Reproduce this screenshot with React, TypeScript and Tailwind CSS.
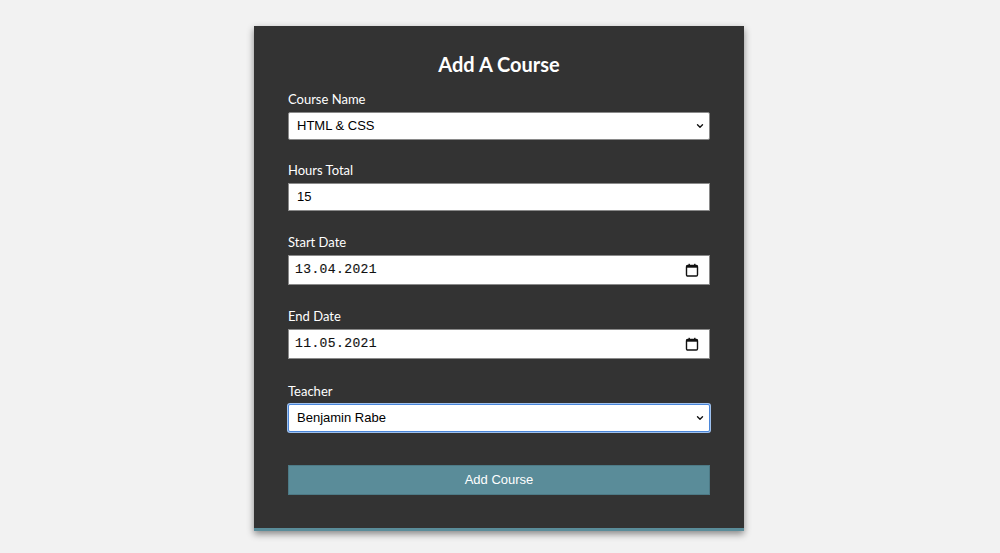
// @ts-nocheck
import React from 'react';

const Label = ({ children }) => (
  <div className="text-[13px] leading-4 text-white font-['Lato',sans-serif]">{children}</div>
);

const Chevron = () => (
  <svg width="8" height="6" viewBox="0 0 8 6" className="shrink-0">
    <path d="M1.5 1.8 L4 4.3 L6.5 1.8" fill="none" stroke="#111" strokeWidth="1.4" strokeLinecap="round" strokeLinejoin="round" />
  </svg>
);

const CalendarIcon = () => (
  <svg width="14" height="14" viewBox="0 0 14 14" className="shrink-0">
    <rect x="1.5" y="2.5" width="11" height="10.5" rx="1.2" fill="none" stroke="#111" strokeWidth="1.4" />
    <rect x="1.5" y="2.5" width="11" height="2.2" fill="#111" />
    <rect x="3.5" y="0.8" width="1.4" height="2.4" fill="#111" />
    <rect x="9.1" y="0.8" width="1.4" height="2.4" fill="#111" />
  </svg>
);

const SelectBox = ({ value, focused }) => (
  <div
    className={`mt-[5px] h-[28px] bg-white flex items-center justify-between pl-2 pr-[5px] text-[13px] text-black font-['Liberation_Sans',Arial,sans-serif] rounded-[2px] ${
      focused ? 'border border-[#4a86d9] shadow-[0_0_0_1px_#9fc1ee]' : 'border border-[#8a8a8a]'
    }`}
  >
    <span>{value}</span>
    <Chevron />
  </div>
);

const TextBox = ({ value }) => (
  <div className="mt-[5px] h-[28px] bg-white border border-[#8a8a8a] flex items-center pl-2 text-[13px] text-black font-['Liberation_Sans',Arial,sans-serif]">
    {value}
  </div>
);

const DateBox = ({ value }) => (
  <div className="mt-[5px] h-[30px] bg-white border border-[#8a8a8a] flex items-center justify-between pl-[6px] pr-[10px] text-[13px] text-[#111] font-['Liberation_Mono',monospace] tracking-[0.4px]">
    <span className="[-webkit-text-stroke:0.15px_#111]">{value}</span>
    <CalendarIcon />
  </div>
);

export default function App() {
  return (
    <div className="min-h-[553px] w-full bg-[#f2f2f2] flex justify-center pt-[26px] pr-[2px]">
      <div className="w-[490px] h-[505px] bg-[#333333] border-b-[3px] border-[#5a8c99] shadow-[0_3px_7px_rgba(0,0,0,0.45)] px-[34px] pt-[26px] flex flex-col">
        <h1 className="text-center text-white text-[20px] leading-6 font-bold font-['Lato',sans-serif]">Add A Course</h1>

        <div className="mt-[15px]">
          <Label>Course Name</Label>
          <SelectBox value="HTML & CSS" />
        </div>

        <div className="mt-[22px]">
          <Label>Hours Total</Label>
          <TextBox value="15" />
        </div>

        <div className="mt-[23px]">
          <Label>Start Date</Label>
          <DateBox value="13.04.2021" />
        </div>

        <div className="mt-[23px]">
          <Label>End Date</Label>
          <DateBox value="11.05.2021" />
        </div>

        <div className="mt-[24px]">
          <Label>Teacher</Label>
          <SelectBox value="Benjamin Rabe" focused />
        </div>

        <button className="mt-[33px] h-[30px] w-full bg-[#5a8c99] border border-[#4d7a86] text-white text-[13px] font-['Liberation_Sans',Arial,sans-serif]">
          Add Course
        </button>
      </div>
    </div>
  );
}
